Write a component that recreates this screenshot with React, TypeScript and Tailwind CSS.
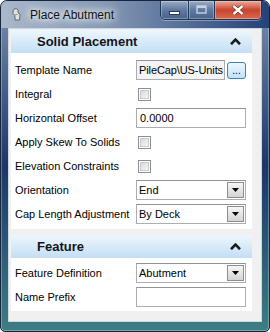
import React from "react";

function Chevron() {
  return (
    <svg width="11" height="7" viewBox="0 0 11 7">
      <path d="M1 6.2 L5.5 1.6 L10 6.2" fill="none" stroke="#1c1c1c" strokeWidth="2.6" strokeLinejoin="miter" />
    </svg>
  );
}

function Header({ title }: { title: string }) {
  return (
    <div className="h-[23px] flex items-center pl-[26px] pr-[11px] bg-linear-to-b from-[#eef6fd] to-[#c3def5]">
      <span className="flex-1 text-[13px] font-bold text-[#151515]">{title}</span>
      <Chevron />
    </div>
  );
}

function Row({ label, children }: { label: string; children?: React.ReactNode }) {
  return (
    <div className="h-6 flex items-center">
      <span className="w-[125px] pl-[4px] text-[11px] text-black whitespace-nowrap">{label}</span>
      <div className="flex items-center">{children}</div>
    </div>
  );
}

function Checkbox() {
  return (
    <div className="ml-[2px] w-[13px] h-[13px] border border-[#8e8f8f] bg-white p-px">
      <div className="w-full h-full border border-[#c6c9cd] bg-linear-to-br from-[#d7dade] to-[#f8f8f8]" />
    </div>
  );
}

function TextBox({ value, gray }: { value?: string; gray?: boolean }) {
  return (
    <div
      className={
        "h-5 border border-[#abadb3] border-t-[#8f939b] flex items-center overflow-hidden whitespace-nowrap text-[11px] " +
        (gray ? "w-[89px] bg-[#f4f4f4] pl-[2px] tracking-[-0.1px]" : "w-[110px] bg-white pl-[3px]")
      }
    >
      {value}
    </div>
  );
}

function Select({ value }: { value: string }) {
  return (
    <div className="h-5 w-[110px] border border-[#abadb3] border-t-[#8f939b] bg-white flex items-center pl-[2px] pr-px">
      <span className="flex-1 text-[11px]">{value}</span>
      <div className="w-[17px] h-[16px] border border-[#8d8d8d] bg-linear-to-b from-[#f6f6f6] to-[#d4d4d4] flex items-center justify-center">
        <svg width="7" height="4" viewBox="0 0 7 4">
          <path d="M0 0 H7 L3.5 4 Z" fill="#000" />
        </svg>
      </div>
    </div>
  );
}

function CaptionButtons() {
  return (
    <div className="ml-auto mr-[7px] flex h-[19px] border border-t-0 border-[#24364f] rounded-b-[5px] overflow-hidden shadow-[0_1px_0_rgba(255,255,255,0.35)]">
      <div className="w-[28px] h-full flex items-center justify-center bg-linear-to-b from-[#9aacc4] via-[#5f7aa0] via-50% to-[#46638e] border-r border-[#24364f] shadow-[inset_0_0_0_1px_rgba(255,255,255,0.3)]">
        <svg width="11" height="4" viewBox="0 0 11 4" className="mt-[5px]">
          <rect x="0.5" y="0.5" width="10" height="3" fill="#fff" stroke="#2a3a55" />
        </svg>
      </div>
      <div className="w-[26px] h-full flex items-center justify-center bg-linear-to-b from-[#9aacc4] via-[#5f7aa0] via-50% to-[#46638e] border-r border-[#24364f] shadow-[inset_0_0_0_1px_rgba(255,255,255,0.3)]">
        <svg width="11" height="9" viewBox="0 0 11 9" className="mb-[2px]">
          <rect x="1" y="1" width="9" height="7" fill="none" stroke="#c8d2e0" strokeWidth="1.4" />
          <rect x="1" y="1" width="9" height="2" fill="#c8d2e0" />
        </svg>
      </div>
      <div className="w-[46px] h-full flex items-center justify-center bg-linear-to-b from-[#eaa99a] via-[#c8432e] via-50% to-[#d9694e] shadow-[inset_0_0_0_1px_rgba(255,210,200,0.45)]">
        <svg width="12" height="10" viewBox="0 0 12 10" className="mb-px">
          <path d="M1.5 1 L10.5 9 M10.5 1 L1.5 9" stroke="#5a1b12" strokeWidth="3.6" />
          <path d="M1.5 1 L10.5 9 M10.5 1 L1.5 9" stroke="#fff" strokeWidth="2.4" />
        </svg>
      </div>
    </div>
  );
}

function AppIcon() {
  return (
    <svg width="9" height="13" viewBox="0 0 9 13">
      <path
        d="M2 1.2 C3.5 0.3 5.6 0.6 6 2.4 L6.2 5 L8 6.2 L7.6 12 L3.2 12 L2.8 7.4 L1 5.6 L1.2 2.6 Z"
        fill="#e2e2e2"
        stroke="#4d4d4d"
        strokeWidth="0.8"
      />
      <path d="M3.2 6.5 L5.8 6.5" stroke="#8a8a8a" strokeWidth="0.8" />
    </svg>
  );
}

export default function App() {
  return (
    <div className="w-[270px] h-[332px] font-['Liberation_Sans',Arial,sans-serif] text-black">
      <div className="w-full h-full flex flex-col rounded-t-[7px] rounded-b-[5px] border border-[#17263d] bg-linear-to-b from-[#7b91b0] via-[#1d3667] via-50% to-[#3d7e83] shadow-[inset_0_0_0_1px_rgba(255,255,255,0.3)] overflow-hidden">
        {/* title bar */}
        <div className="h-[27px] flex items-start bg-linear-to-r from-[#a9b8cb] via-[#8397b3] via-40% to-[#24427a] rounded-t-[6px]">
          <div className="h-[27px] flex items-center pl-[11px] gap-[9px]">
            <AppIcon />
            <span className="text-[12px] text-[#111] [text-shadow:0_0_6px_#fff,0_0_10px_#fff,0_0_14px_rgba(255,255,255,0.8)]">
              Place Abutment
            </span>
          </div>
          <CaptionButtons />
        </div>

        {/* client area */}
        <div className="mx-[7px] w-[254px] h-[294px] border border-[#cfd7e1] bg-[#f0f0f0] pt-px pl-[2px]">
          <div className="w-[241px] bg-white pb-[3px]">
            <Header title="Solid Placement" />
            <div className="pt-[5px]">
              <Row label="Template Name">
                <TextBox value="PileCap\US-Units" gray />
                <div className="ml-[2px] w-[19px] h-[17px] rounded-[3px] border border-[#3c7fb1] bg-linear-to-b from-[#edf7fe] to-[#bfe3fb] flex items-end justify-center text-[10px] leading-[12px] pb-px">
                  ...
                </div>
              </Row>
              <Row label="Integral">
                <Checkbox />
              </Row>
              <Row label="Horizontal Offset">
                <TextBox value="0.0000" />
              </Row>
              <Row label="Apply Skew To Solids">
                <Checkbox />
              </Row>
              <Row label="Elevation Constraints">
                <Checkbox />
              </Row>
              <Row label="Orientation">
                <Select value="End" />
              </Row>
              <Row label="Cap Length Adjustment">
                <Select value="By Deck" />
              </Row>
            </div>
          </div>

          <div className="mt-[6px] w-[241px] bg-white pb-[2px]">
            <Header title="Feature" />
            <div className="pt-[3px]">
              <Row label="Feature Definition">
                <Select value="Abutment" />
              </Row>
              <Row label="Name Prefix">
                <TextBox />
              </Row>
            </div>
          </div>
        </div>
      </div>
    </div>
  );
}
